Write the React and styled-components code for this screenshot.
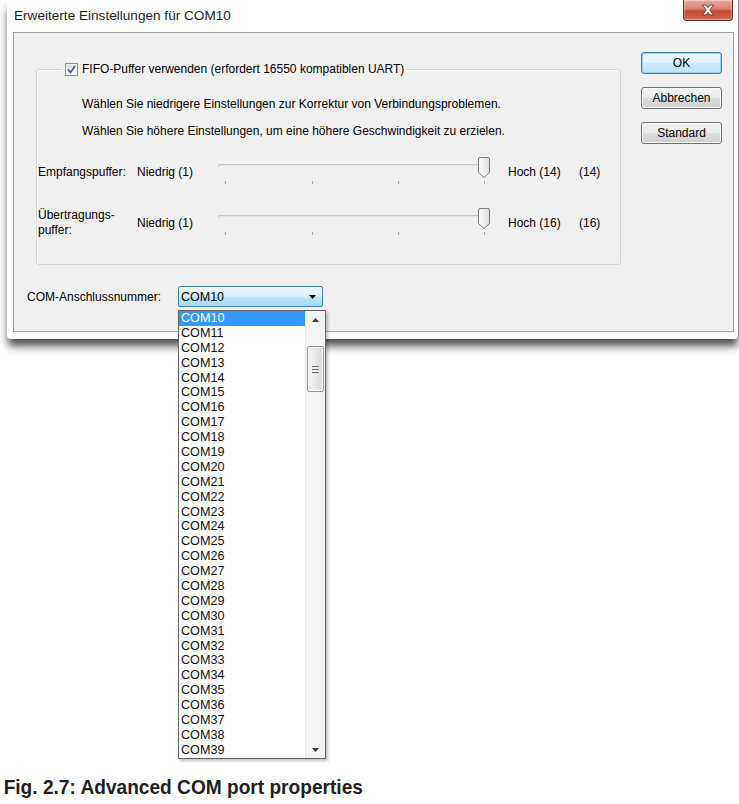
import React from "react";
import styled, { createGlobalStyle } from "styled-components";

const GlobalStyle = createGlobalStyle`
  html, body {
    margin: 0;
    padding: 0;
    background: #ffffff;
  }
  body {
    font-family: "Liberation Sans", Arial, sans-serif;
    font-size: 12px;
    color: #000;
  }
`;

const Page = styled.div`
  width: 739px;
  height: 804px;
  display: flex;
  flex-direction: column;
  overflow: hidden;
`;

const Window = styled.div`
  margin-left: 7px;
  width: 732px;
  box-sizing: border-box;
  padding: 0 4px 7px 6px;
  background: #ffffff;
  border-right: 1px solid #8d8d8d;
  border-radius: 0 0 4px 4px;
  box-shadow: 0 8px 8px -1px rgba(0, 0, 0, 0.7);
  position: relative;
`;

const TitleBar = styled.div`
  height: 32px;
  display: flex;
  align-items: center;
  padding-left: 1px;
  padding-bottom: 2px;
  box-sizing: border-box;
`;

const Title = styled.div`
  font-family: "Liberation Sans", Arial, sans-serif;
  font-size: 13.6px;
  color: #1e1e1e;
`;

const CloseButton = styled.div`
  position: absolute;
  top: 0;
  right: 5px;
  width: 50px;
  height: 21px;
  border: 1px solid #6d2a22;
  border-top: none;
  border-radius: 0 0 4px 4px;
  box-sizing: border-box;
  background: linear-gradient(#e9a99d 0%, #d9806f 45%, #c44a36 55%, #cf6b4f 100%);
  box-shadow: inset 0 0 0 1px rgba(255, 255, 255, 0.35);
  display: flex;
  align-items: center;
  justify-content: center;
`;

const Client = styled.div`
  height: 300px;
  box-sizing: border-box;
  border: 1px solid #a3a3a3;
  background: #f0f0f0;
  display: flex;
`;

const Main = styled.div`
  padding: 28px 0 0 13px;
  display: flex;
  flex-direction: column;
`;

const GroupBox = styled.fieldset`
  margin: 0 0 0 9px;
  padding: 0 0 28px 0;
  width: 585px;
  box-sizing: border-box;
  border: 1px solid #d5d5d5;
  border-radius: 3px;
  box-shadow: inset 1px 1px 0 #ffffff;
  min-width: 0;
`;

const Legend = styled.legend`
  margin-left: 25px;
  padding: 0 3px;
  height: 16px;
  display: flex;
  align-items: center;
  gap: 4px;
`;

const CheckBox = styled.span`
  width: 13px;
  height: 13px;
  box-sizing: border-box;
  border: 1px solid #8e8f8f;
  background: linear-gradient(135deg, #dcdcdc, #ffffff);
  box-shadow: inset 0 0 0 1px #f4f4f4;
  display: flex;
  align-items: center;
  justify-content: center;
`;

const Hint = styled.div`
  margin: ${(p) => p.$top}px 0 0 45px;
  line-height: 14px;
  white-space: nowrap;
`;

const SliderRow = styled.div`
  margin: ${(p) => p.$top}px 0 0 1px;
  height: 30px;
  display: grid;
  grid-template-columns: 99px 81px 290px 71px auto;
  align-items: center;
`;

const RowText = styled.div`
  line-height: 15px;
  padding-top: 2px;
  white-space: nowrap;
`;

const ComRow = styled.div`
  margin-top: 21px;
  display: flex;
  align-items: center;
`;

const ComLabel = styled.div`
  width: 151px;
  padding-top: 1px;
`;

const ComboWrap = styled.div`
  position: relative;
`;

const Combo = styled.div`
  width: 145px;
  height: 21px;
  box-sizing: border-box;
  border: 1px solid #3c7fb1;
  border-radius: 2px;
  background: linear-gradient(#eaf6fd 0%, #d9f0fc 50%, #bee6fd 51%, #a7d9f5 100%);
  display: flex;
  align-items: center;
  justify-content: space-between;
  padding: 0 6px 0 2px;
  font-size: 12.5px;
`;

const DropList = styled.div`
  position: absolute;
  top: 24px;
  left: 0;
  width: 148px;
  height: 449px;
  box-sizing: border-box;
  border: 1px solid #646464;
  background: #ffffff;
  box-shadow: 2px 2px 3px rgba(0, 0, 0, 0.25);
  display: flex;
  z-index: 10;
`;

const Items = styled.div`
  flex: 1;
  overflow: hidden;
`;

const Item = styled.div`
  height: 14.9px;
  line-height: 14.9px;
  padding-left: 2px;
  font-size: 12.6px;
  color: ${(p) => (p.$selected ? "#ffffff" : "#111111")};
  background: ${(p) => (p.$selected ? "#3399ff" : "transparent")};
`;

const ScrollBar = styled.div`
  width: 19px;
  background: #f3f3f3;
  border-left: 1px solid #e6e6e6;
  display: flex;
  flex-direction: column;
`;

const ArrowCell = styled.div`
  height: 17px;
  display: flex;
  align-items: center;
  justify-content: center;
`;

const ScrollTrack = styled.div`
  flex: 1;
`;

const Thumb = styled.div`
  margin: 18px 1px 0 1px;
  height: 46px;
  box-sizing: border-box;
  border: 1px solid #979797;
  border-radius: 2px;
  background: linear-gradient(90deg, #f4f4f4 0%, #e8e8e8 50%, #d8d8d8 100%);
  box-shadow: inset 0 0 0 1px #fbfbfb;
  display: flex;
  align-items: center;
  justify-content: center;
`;

const Grip = styled.div`
  width: 7px;
  height: 7px;
  background: repeating-linear-gradient(#6d6d6d 0 1px, #f0f0f0 1px 3px);
`;

const ButtonColumn = styled.div`
  margin-left: auto;
  padding: 19px 11px 0 0;
  display: flex;
  flex-direction: column;
  gap: 13px;
`;

const Button = styled.div`
  width: 81px;
  height: 22px;
  box-sizing: border-box;
  border: 1px solid ${(p) => (p.$default ? "#3c7fb1" : "#707070")};
  border-radius: 3px;
  background: ${(p) =>
    p.$default
      ? "linear-gradient(#eaf6fd 0%, #e2f2fb 50%, #cfe9f8 51%, #c4e3f6 100%)"
      : "linear-gradient(#f2f2f2 0%, #ebebeb 50%, #dddddd 51%, #cfcfcf 100%)"};
  box-shadow: inset 0 0 0 1px ${(p) => (p.$default ? "#94d2f1" : "#fcfcfc")};
  display: flex;
  align-items: center;
  justify-content: center;
  font-size: 12px;
`;

const Caption = styled.div`
  margin-top: auto;
  padding: 0 0 5px 4px;
  font-family: "Liberation Sans", Arial, sans-serif;
  font-weight: bold;
  font-size: 21px;
  line-height: 24px;
  color: #231f20;
  white-space: nowrap;
  transform: scaleX(0.91);
  transform-origin: left center;
`;

const Slider = () => (
  <svg width="290" height="30" viewBox="0 0 290 30">
    <defs>
      <linearGradient id="thumbFill" x1="0" y1="0" x2="1" y2="0">
        <stop offset="0" stopColor="#ffffff" />
        <stop offset="1" stopColor="#dcdcdc" />
      </linearGradient>
    </defs>
    <path d="M0.5 11 L0.5 8.5 L269.5 8.5" fill="none" stroke="#c9c9c9" />
    <line x1="1" y1="9.5" x2="269" y2="9.5" stroke="#e6e6e6" />
    {[7, 94, 180, 266].map((x) => (
      <line key={x} x1={x + 0.5} y1="25" x2={x + 0.5} y2="28" stroke="#a8a8a8" />
    ))}
    <path
      d="M260.5 3 Q260.5 1.5 262 1.5 L270 1.5 Q271.5 1.5 271.5 3 L271.5 16.5 L266 21.5 L260.5 16.5 Z"
      fill="url(#thumbFill)"
      stroke="#7a7a7a"
    />
  </svg>
);

const items = Array.from({ length: 30 }, (_, i) => `COM${10 + i}`);

const App = () => {
  return (
    <Page>
      <GlobalStyle />
      <Window>
        <TitleBar>
          <Title>Erweiterte Einstellungen für COM10</Title>
        </TitleBar>
        <CloseButton>
          <svg width="14" height="12" viewBox="0 0 14 12">
            <path
              d="M1.5 1 L5 1 L7 3.6 L9 1 L12.5 1 L8.8 6 L12.5 11 L9 11 L7 8.4 L5 11 L1.5 11 L5.2 6 Z"
              fill="#ffffff"
              stroke="#5a2018"
              strokeWidth="0.8"
              strokeLinejoin="round"
            />
          </svg>
        </CloseButton>
        <Client>
          <Main>
            <GroupBox>
              <Legend>
                <CheckBox>
                  <svg width="9" height="9" viewBox="0 0 9 9">
                    <path d="M1 4.5 L3.5 7.5 L8 1" fill="none" stroke="#3a5a9a" strokeWidth="1.6" />
                  </svg>
                </CheckBox>
                FIFO-Puffer verwenden (erfordert 16550 kompatiblen UART)
              </Legend>
              <Hint $top={20}>
                Wählen Sie niedrigere Einstellungen zur Korrektur von Verbindungsproblemen.
              </Hint>
              <Hint $top={13}>
                Wählen Sie höhere Einstellungen, um eine höhere Geschwindigkeit zu erzielen.
              </Hint>
              <SliderRow $top={18}>
                <RowText>Empfangspuffer:</RowText>
                <RowText>Niedrig (1)</RowText>
                <Slider />
                <RowText>Hoch (14)</RowText>
                <RowText>(14)</RowText>
              </SliderRow>
              <SliderRow $top={20}>
                <RowText>
                  Übertragungs-
                  <br />
                  puffer:
                </RowText>
                <RowText>Niedrig (1)</RowText>
                <Slider />
                <RowText>Hoch (16)</RowText>
                <RowText>(16)</RowText>
              </SliderRow>
            </GroupBox>
            <ComRow>
              <ComLabel>COM-Anschlussnummer:</ComLabel>
              <ComboWrap>
                <Combo>
                  <span>COM10</span>
                  <svg width="7" height="4" viewBox="0 0 7 4">
                    <path d="M0 0 L7 0 L3.5 4 Z" fill="#000" />
                  </svg>
                </Combo>
                <DropList>
                  <Items>
                    {items.map((name, i) => (
                      <Item key={name} $selected={i === 0}>
                        {name}
                      </Item>
                    ))}
                  </Items>
                  <ScrollBar>
                    <ArrowCell>
                      <svg width="7" height="4" viewBox="0 0 7 4">
                        <path d="M0 4 L7 4 L3.5 0 Z" fill="#3a3a3a" />
                      </svg>
                    </ArrowCell>
                    <ScrollTrack>
                      <Thumb>
                        <Grip />
                      </Thumb>
                    </ScrollTrack>
                    <ArrowCell>
                      <svg width="7" height="4" viewBox="0 0 7 4">
                        <path d="M0 0 L7 0 L3.5 4 Z" fill="#3a3a3a" />
                      </svg>
                    </ArrowCell>
                  </ScrollBar>
                </DropList>
              </ComboWrap>
            </ComRow>
          </Main>
          <ButtonColumn>
            <Button $default>OK</Button>
            <Button>Abbrechen</Button>
            <Button>Standard</Button>
          </ButtonColumn>
        </Client>
      </Window>
      <Caption>Fig. 2.7: Advanced COM port properties</Caption>
    </Page>
  );
};

export default App;
